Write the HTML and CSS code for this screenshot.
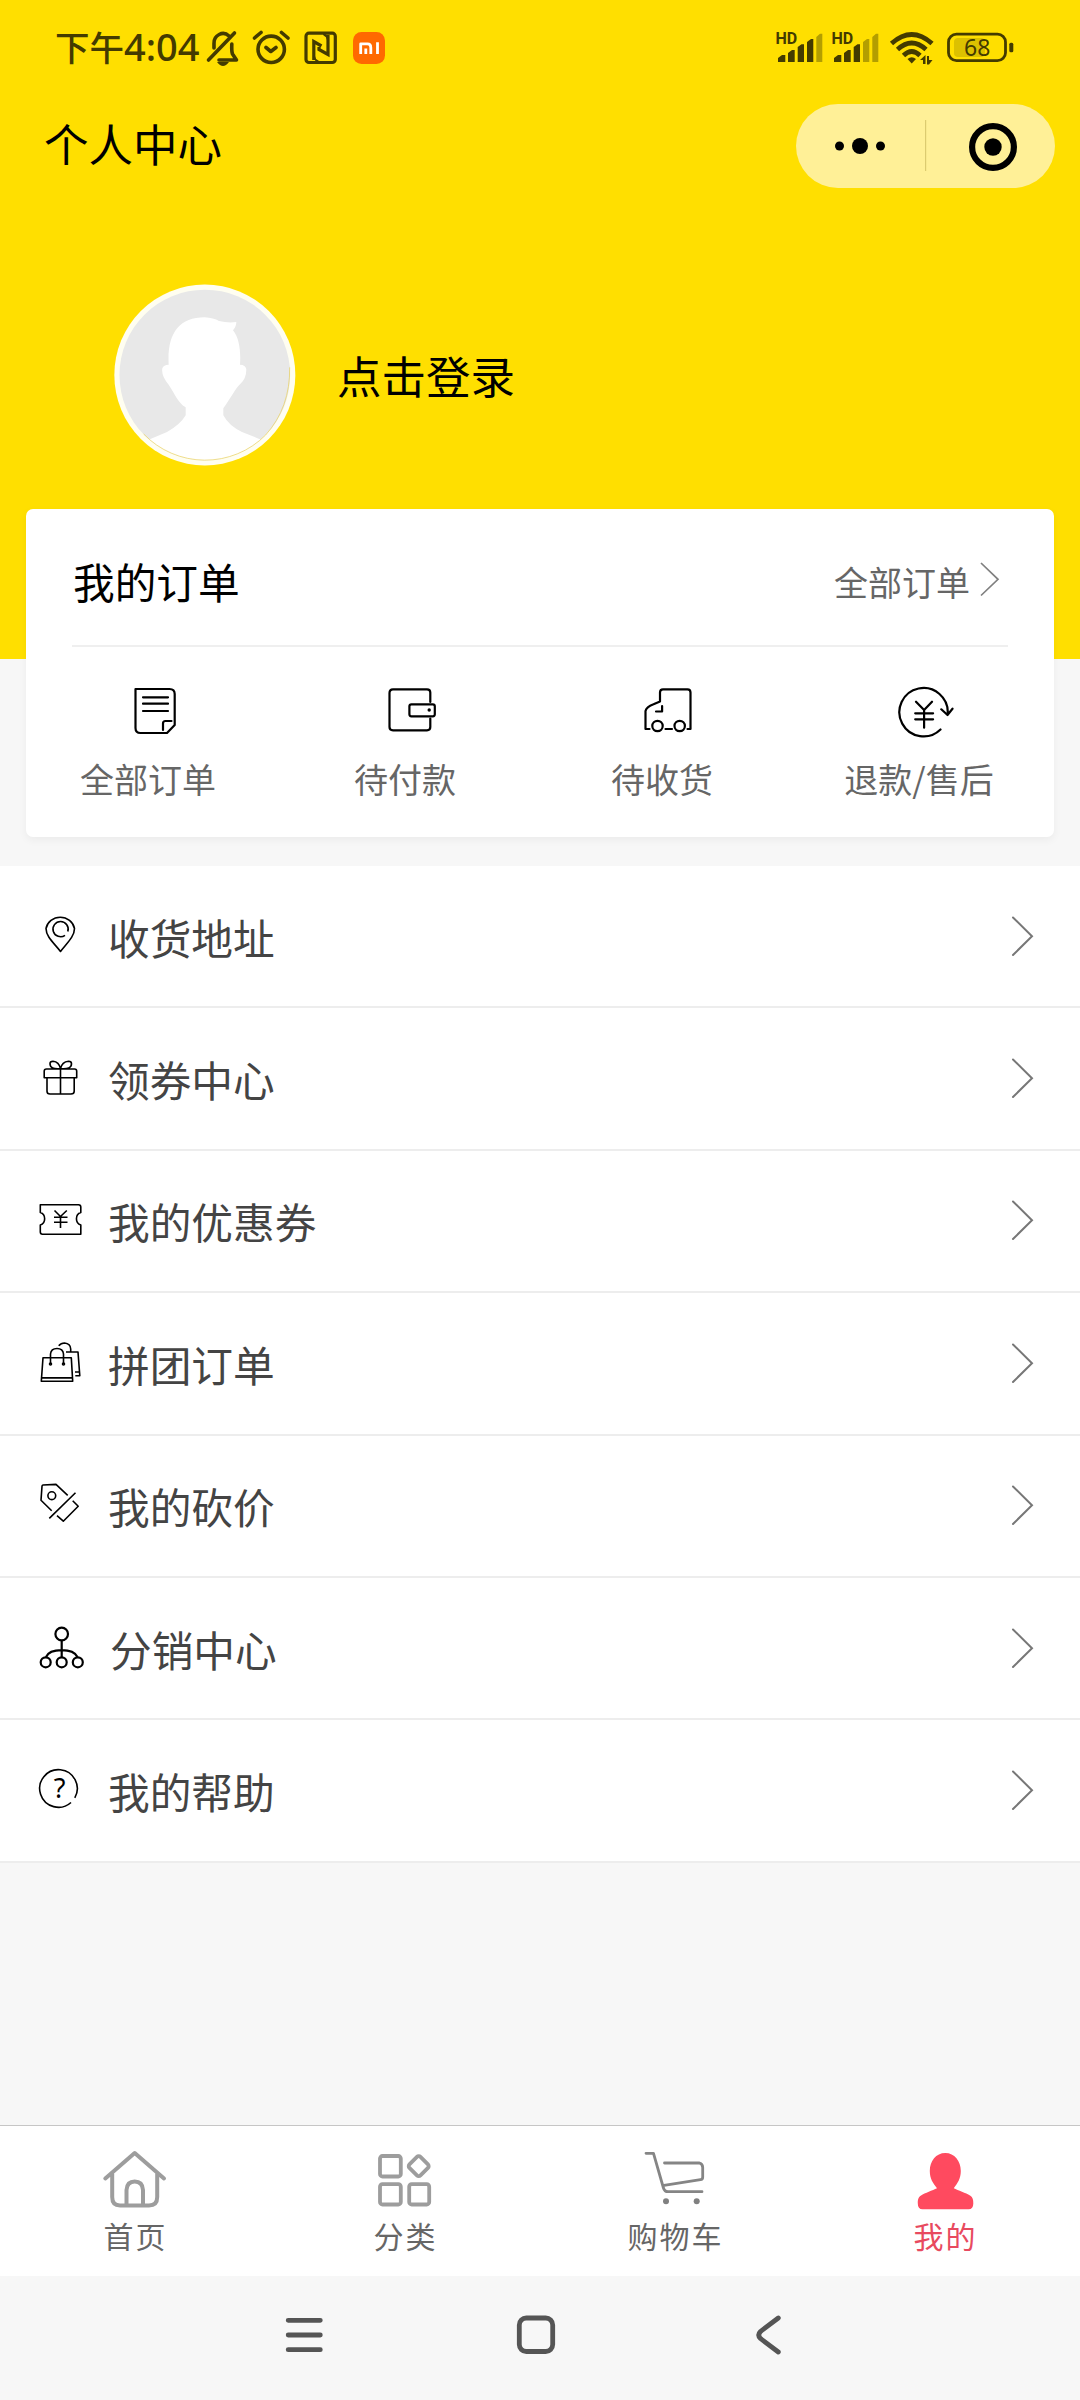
FILE: index.html
```html
<!DOCTYPE html>
<html lang="zh-CN">
<head>
<meta charset="utf-8">
<title>个人中心</title>
<link rel="stylesheet" href="styles.css">
</head>
<body>
<div class="screen">
  <header class="hero">
    <div class="status">
      <div class="status-left">
        <span class="time-cn">下午</span><span class="time">4:04</span>
        <svg class="status-icons" width="184" height="40" viewBox="204 28 184 40" fill="none" stroke="#443b00" stroke-width="3.6" stroke-linecap="round" stroke-linejoin="round">
          <path d="M214 48V43.500a9 9.500 0 0 1 15-7.500M208.500 60L234.500 33M219 60H236.500L232.500 54Q231.500 51.500 231.800 44"/>
          <path d="M217 62H229Q226 66 223 66Q220 66 217 62Z" fill="#443b00" stroke="none"/>
          <circle cx="271.200" cy="49.300" r="13.200"/>
          <path d="M254.500 38L261 32.500M288 38L281.500 32.500M266 47.500L270.800 51.500L276 47.500"/>
          <rect x="306" y="33.200" width="29.300" height="29.300" rx="3" stroke-width="3.200"/>
          <path d="M313.800 60V41.500L321.500 46M328 35V54.500L319 49.500V47" stroke-width="3.200" stroke-linecap="butt" stroke-linejoin="miter"/>
          <path d="M314 56Q314.500 60 318 61.500M328 40Q327.500 36 324 34.500" stroke-width="2"/>
          <rect x="353" y="32" width="32" height="32" rx="8.500" fill="#ff6900" stroke="none"/>
          <path d="M360.700 54V43.800H367.500Q370.800 43.800 370.800 47.500V54M365.800 48.500V54M377.500 42.300V54" stroke="#fff" stroke-width="2.800" stroke-linecap="butt"/>
        </svg>
      </div>
      <div class="status-right">
        <svg width="240" height="40" viewBox="775 28 240 40" fill="#443b00">
          <text class="hd" x="775.500" y="44">HD</text>
          <path d="M778 62V58L782 55H785.300V62ZM788 62V53L792 50H794.700V62ZM797.700 62V47L801.500 44.300H804V62ZM807 62V42L811 39H813.300V62Z"/>
          <path d="M816.300 62V37L820 33.700H822.300V62Z" fill="#b39e00"/>
          <text class="hd" x="831.500" y="44">HD</text>
          <path d="M834 62V58L838 55H841.300V62ZM844 62V53L848 50H850.700V62ZM853.700 62V47L857.500 44.300H860V62Z"/>
          <path d="M863 62V42L867 39H869.300V62ZM872.300 62V37L876 33.700H878.300V62Z" fill="#b39e00"/>
          <g fill="none" stroke="#443b00" stroke-width="4.800">
            <path d="M891.500 43.500Q911.700 25.500 932 43.500"/>
            <path d="M897.500 49.500Q911.700 36.500 926 49.500"/>
            <path d="M903.500 55.500Q911.700 47.500 920 55.500"/>
          </g>
          <path d="M907.500 59Q911.700 55.500 916 59L911.700 63.500Z"/>
          <path d="M920 60L925.500 55V64H923V60ZM927 56H929V60H932.500L929 64.500H927Z"/>
          <rect x="954" y="38" width="31" height="19" rx="4" fill="#dcc100"/>
          <rect x="948.500" y="34.200" width="57" height="26.500" rx="8" fill="none" stroke="#443b00" stroke-width="2.800"/>
          <rect x="1009.300" y="42.700" width="4" height="9.500" rx="1.500"/>
          <text class="battery" x="977.200" y="55.800" text-anchor="middle">68</text>
        </svg>
      </div>
    </div>
    <div class="titlebar">
      <h1>个人中心</h1>
      <div class="capsule">
        <svg width="259" height="84" viewBox="796 104 259 84">
          <circle cx="839.500" cy="146" r="4.500"/><circle cx="860" cy="146" r="8"/><circle cx="880.500" cy="146" r="4.500"/>
          <path d="M925.600 120V171" stroke="#dccb70" stroke-width="1.200"/>
          <circle cx="993" cy="147" r="20.900" fill="none" stroke="#000" stroke-width="6.200"/><circle cx="993" cy="147" r="8.700"/>
        </svg>
      </div>
    </div>
    <div class="login">
      <svg width="182" height="182" viewBox="71 70 546 546">
        <defs><clipPath id="face"><circle cx="343.500" cy="343" r="256"/></clipPath></defs>
        <circle cx="343.500" cy="343" r="271.500" fill="#fffef0"/>
        <circle cx="343.500" cy="343" r="256" fill="#e8e8e8"/>
        <path clip-path="url(#face)" fill="#fff" d="M140 550L182 534L230 514Q270 492 286 464V440C262 425 254 400 235 372Q212 345 216 323Q220 312 235 312C230 220 265 170 343 170Q370 172 386 181Q415 188 438 184Q438 198 428 209C446 230 452 270 449 312Q466 312 468 326Q468 355 449 371C436 382 420 415 399 443V464Q415 495 455 514L505 534L545 550V616H140Z"/>
        <path d="M160 520A256 256 0 0 0 526 523Q600 440 598 320" fill="none" stroke="#e8cf55" stroke-width="2"/>
      </svg>
      <span>点击登录</span>
    </div>
  </header>

  <section class="orders">
    <div class="orders-head">
      <h2>我的订单</h2>
      <a class="all">全部订单<svg width="20" height="36" viewBox="980.500 562 20 36" fill="none" stroke="#808080" stroke-width="1.700"><path d="M981.500 564L998.500 580.300L981.500 596.500"/></svg></a>
    </div>
    <div class="order-types">
      <div class="type">
        <svg width="60" height="60" viewBox="124.500 682 60 60"><path d="M135 688H169Q174.200 688 174.200 693V724L166.500 732H140Q135 732 135 727ZM142.500 696.300H167.500M142.500 702.700H167.500M142.500 710H167.500M162.500 729V722.500Q162.500 720 165 720H171"/></svg>
        <span>全部订单</span>
      </div>
      <div class="type">
        <svg width="60" height="60" viewBox="381.500 682 60 60"><path d="M429.800 701V691.500Q429.800 688.300 426.500 688.300H392.500Q389 688.300 389 692V726Q389 729.300 392.500 729.300H426.500Q429.800 729.300 429.800 726V717.500"/><rect x="408.900" y="703.300" width="25.400" height="12" rx="2"/><circle cx="428.700" cy="709" r="1.700" class="solid"/></svg>
        <span>待付款</span>
      </div>
      <div class="type">
        <svg width="60" height="60" viewBox="638.500 682 60 60"><path d="M649 728H645V710Q646 706 653 703.300L659.500 700.500V691.500Q659.500 688.300 662.500 688.300H687Q690 688.300 690 691.500V728H687M665 728H671.500M661.600 705V710.500H655.500"/><circle cx="657" cy="725" r="5.200"/><circle cx="679.200" cy="725" r="5.200"/></svg>
        <span>待收货</span>
      </div>
      <div class="type">
        <svg width="60" height="60" viewBox="895.500 682 60 60"><path d="M940 728.500A24.200 24.200 0 1 1 947.200 713M940.800 708.300L947 714L952 707.700M915.500 700.700L923.600 709L931.500 700.700M923.600 709V726.700M914.700 712.300H932.600M914.700 718.300H932.600"/></svg>
        <span>退款/售后</span>
      </div>
    </div>
  </section>

  <nav class="menu">
    <a class="row"><svg class="ic" width="48" height="48" viewBox="37 911 48 48"><path d="M60.500 951.500C55 944 46 937 46 928.500A14.500 13.800 0 0 1 74.500 928.500C74.500 937 66 944 60.500 951.500ZM65 935.300A7.600 7.600 0 1 1 67.800 931.500"/></svg><span>收货地址</span><svg class="go" width="24" height="42" viewBox="1011 914 24 42"><path d="M1013 916.500L1032 935.200L1013 954"/></svg></a>
    <a class="row"><svg class="ic" width="48" height="48" viewBox="37 1053.300 48 48"><path d="M46.500 1069.300H74.500Q76.700 1069.300 76.700 1071.500V1078H44.200V1071.500Q44.200 1069.300 46.500 1069.300ZM47 1078V1091.500Q47 1094.300 50 1094.300H71Q74.200 1094.300 74.200 1091.500V1078M60.500 1069V1094M60.500 1069Q50 1070 50 1064Q50 1061.500 53 1061.500Q59 1062 60.500 1069ZM60.500 1069Q71.500 1070 71.500 1064Q71.500 1061.500 68.500 1061.500Q62 1062 60.500 1069Z"/></svg><span>领券中心</span><svg class="go" width="24" height="42" viewBox="1011 914 24 42"><path d="M1013 916.500L1032 935.200L1013 954"/></svg></a>
    <a class="row"><svg class="ic" width="48" height="48" viewBox="37 1196 48 48"><path d="M40.300 1205.700H78.500Q80.800 1205.700 80.800 1208V1213.500A6 6.500 0 0 0 80.800 1226V1235.200H42.500Q40.300 1235.200 40.300 1233V1226A6 6.500 0 0 0 40.300 1213.500ZM54.500 1211.500L60.500 1217.500L66.800 1211.500M60.500 1217.500V1229M54 1218.300H67.500M54 1223.300H67.500"/></svg><span>我的优惠券</span><svg class="go" width="24" height="42" viewBox="1011 914 24 42"><path d="M1013 916.500L1032 935.200L1013 954"/></svg></a>
    <a class="row"><svg class="ic" width="48" height="48" viewBox="37 1338 48 48"><path d="M43 1357.700H71.300L72.700 1381.300H41.300ZM41.500 1377.900H72.500M50.500 1364V1354Q51 1348.500 57 1348.500Q63 1348.500 63.500 1354V1364M58.700 1345.800Q61 1343 64.500 1343Q70.500 1343.500 70.700 1349V1352M66 1352H78L79.800 1375.800H75.300M75 1372H79"/><circle cx="50.500" cy="1364" r="1" /><circle cx="63.500" cy="1364" r="1"/></svg><span>拼团订单</span><svg class="go" width="24" height="42" viewBox="1011 914 24 42"><path d="M1013 916.500L1032 935.200L1013 954"/></svg></a>
    <a class="row"><svg class="ic" width="48" height="48" viewBox="37 1480.300 48 48"><path d="M51.700 1511L41 1500.500L42 1486.500Q42 1485.500 43 1485.300L56 1484.700L67.700 1495.700M49.300 1518.700L75.500 1493M72.700 1501L78.200 1506.500L63.300 1521.500L57 1516"/><circle cx="51.800" cy="1496" r="3.900"/></svg><span>我的砍价</span><svg class="go" width="24" height="42" viewBox="1011 914 24 42"><path d="M1013 916.500L1032 935.200L1013 954"/></svg></a>
    <a class="row"><svg class="ic bold" width="50" height="48" viewBox="37 1622.500 50 48"><circle cx="61.700" cy="1633.500" r="6.300"/><circle cx="45.700" cy="1661.800" r="5"/><circle cx="61.700" cy="1661.800" r="5"/><circle cx="77.800" cy="1661.800" r="5"/><path d="M61.700 1640V1656.500M46 1656.500Q49 1649.700 61.700 1649.700Q74 1649.700 77.500 1656.500"/></svg><span>分销中心</span><svg class="go" width="24" height="42" viewBox="1011 914 24 42"><path d="M1013 916.500L1032 935.200L1013 954"/></svg></a>
    <a class="row"><svg class="ic" width="48" height="48" viewBox="37 1764.700 48 48"><path d="M71 1802.200A18.800 18.800 0 1 1 74.800 1797.500"/><text class="question" x="59.700" y="1797.600" text-anchor="middle">?</text></svg><span>我的帮助</span><svg class="go" width="24" height="42" viewBox="1011 914 24 42"><path d="M1013 916.500L1032 935.200L1013 954"/></svg></a>
  </nav>

  <nav class="tabs">
    <a class="tab"><svg width="70" height="64" viewBox="100 2150 70 64" stroke="#9d9d9d" stroke-width="4"><path d="M105.300 2178.500L134.700 2153L164 2178.500M112.200 2174V2197Q112.200 2205.500 120 2205.500H149Q157.200 2205.500 157.200 2197V2174M126.500 2205V2190Q127 2181.500 134.700 2181.500Q142.500 2181.500 143 2190V2205"/></svg><span>首页</span></a>
    <a class="tab"><svg width="70" height="64" viewBox="370 2150 70 64" stroke="#9d9d9d" stroke-width="3.800"><rect x="380" y="2156" width="20.800" height="20.500" rx="2.500"/><rect x="380" y="2184.200" width="20.800" height="20.300" rx="2.500"/><rect x="409.200" y="2184.200" width="20" height="20.300" rx="2.500"/><rect x="410.900" y="2158.400" width="15.600" height="15.600" rx="2.500" transform="rotate(45 418.700 2166.200)"/></svg><span>分类</span></a>
    <a class="tab"><svg width="70" height="64" viewBox="640 2150 70 64" stroke="#858585" stroke-width="2.800"><path d="M646 2153.300H653.500L663.300 2187.500Q664.500 2191.700 668 2191.700H702M664.500 2163H699.500Q702.700 2164 702.700 2167.500V2177Q702.700 2179.500 700.500 2179.700L664 2185.300"/><g fill="#808080" stroke="none"><circle cx="666" cy="2201.200" r="3"/><circle cx="696.700" cy="2201.200" r="3"/></g></svg><span>购物车</span></a>
    <a class="tab active"><svg width="70" height="64" viewBox="910 2150 70 64"><path fill="#ff4a5f" d="M945.300 2153C954.500 2153 960.800 2161 960.800 2171C960.800 2179 957.500 2183 953.800 2188.300C958 2190.500 966 2193 970 2195.500C973 2197.500 973.300 2200 973.300 2203.500Q973.300 2209.300 968.500 2209.300H922.500Q917.800 2209.300 917.800 2203.500C917.800 2200 918 2197.500 921 2195.500C925 2193 932.500 2190.500 937 2188.300C933 2183 929.800 2179 929.800 2171C929.800 2161 936 2153 945.300 2153Z"/></svg><span>我的</span></a>
  </nav>

  <footer class="sysnav">
    <svg width="44" height="44" viewBox="282 2313 44 44"><path d="M288.200 2320.300H320.300M288.200 2335H320.300M288.200 2349.700H320.300"/></svg>
    <svg width="44" height="44" viewBox="515 2313 44 44"><rect x="520.300" y="2318" width="33.400" height="33.500" rx="7"/></svg>
    <svg width="44" height="44" viewBox="746 2313 44 44"><path d="M778.300 2318L760.500 2331.500Q757 2335 760.500 2338.500L778.300 2352"/></svg>
  </footer>
</div>
</body>
</html>
```
FILE: styles.css
```css
* { box-sizing: border-box; margin: 0; padding: 0; }
body {
  width: 1080px;
  background: #f7f7f7;
  font-family: "Noto Sans CJK SC", sans-serif;
  font-weight: 400;
  color: #000;
}
svg { display: block; flex: none; }
.screen { height: 2400px; display: flex; flex-direction: column; overflow: hidden; }

.hero { height: 659px; flex: none; background: #ffdf00; }
.status { height: 104px; padding: 28px 65px 0 55px; display: flex; justify-content: space-between; color: #443b00; }
.status-left { display: flex; line-height: 36px; font-weight: 500; }
.time-cn { width: 69px; font-size: 34.500px; }
.time { width: 80px; font-family: "Noto Sans", sans-serif; font-size: 38px; }
.hd { font: 700 16px Roboto, sans-serif; }
.battery { font: 400 23px "Noto Sans", sans-serif; }

.titlebar { height: 84px; padding: 0 25px 0 44px; display: flex; align-items: center; justify-content: space-between; }
h1 { font-size: 44.500px; font-weight: 400; line-height: 60px; padding-bottom: 6px; }
.capsule { height: 84px; border-radius: 42px; background: #fff097; }

.login { padding: 95.500px 0 0 113.500px; display: flex; align-items: center; gap: 41.500px; font-size: 44.500px; }
.login span { line-height: 60px; }

.orders {
  flex: none;
  height: 328px;
  margin: -150px 26px 0;
  border-radius: 7px;
  background: #fff;
  box-shadow: 0 3px 8px rgba(0, 0, 0, .05);
}
.orders-head { height: 138px; margin: 0 46px; padding: 8px 8px 0 1px; border-bottom: 2px solid #efefef; display: flex; align-items: center; justify-content: space-between; }
h2 { font-size: 41.700px; font-weight: 400; }
.all { display: flex; align-items: center; gap: 10px; font-size: 34px; color: #666; }
.all svg { margin-top: -4px; }
.order-types { display: grid; grid-template-columns: repeat(4, 1fr); padding-top: 36px; }
.type { display: flex; flex-direction: column; align-items: center; font-size: 34px; line-height: 50px; color: #666; }
.type svg { fill: none; stroke: #000; stroke-width: 2.200; stroke-linecap: round; stroke-linejoin: round; }
.type .solid { fill: #000; stroke: none; }
.type span { margin: 11px 13px 0 0; }

.menu { flex: none; margin-top: 29px; background: #fff; }
.row { height: 142.400px; padding: 1px 45px 0 37px; border-bottom: 2px solid #ededed; display: flex; align-items: center; font-size: 41.700px; color: #444; }
.row span { flex: 1; margin-left: 23px; }
.ic { margin-top: -4px; fill: none; stroke: #000; stroke-width: 1.600; stroke-linejoin: round; }
.ic.bold { stroke-width: 2.200; }
.question { font: 400 27px "Noto Sans", sans-serif; fill: #000; stroke: none; }
.go { margin-top: -2px; fill: none; stroke: #777; stroke-width: 2; stroke-linecap: round; }

.tabs { flex: none; height: 151px; margin-top: auto; background: #fff; border-top: 1px solid #c6c6c6; display: grid; grid-template-columns: repeat(4, 1fr); }
.tab { display: flex; flex-direction: column; align-items: center; padding-top: 24px; font-size: 30px; letter-spacing: 2px; line-height: 44px; color: #666; }
.tab svg { fill: none; stroke-linecap: round; stroke-linejoin: round; }
.tab span { margin: -1px 0 0 1px; }
.tab.active { color: #e84a5f; }

.sysnav { flex: none; height: 124px; padding: 37px 290px 0 282px; display: flex; justify-content: space-between; }
.sysnav svg { fill: none; stroke: #555; stroke-width: 4.800; stroke-linecap: round; }
```
